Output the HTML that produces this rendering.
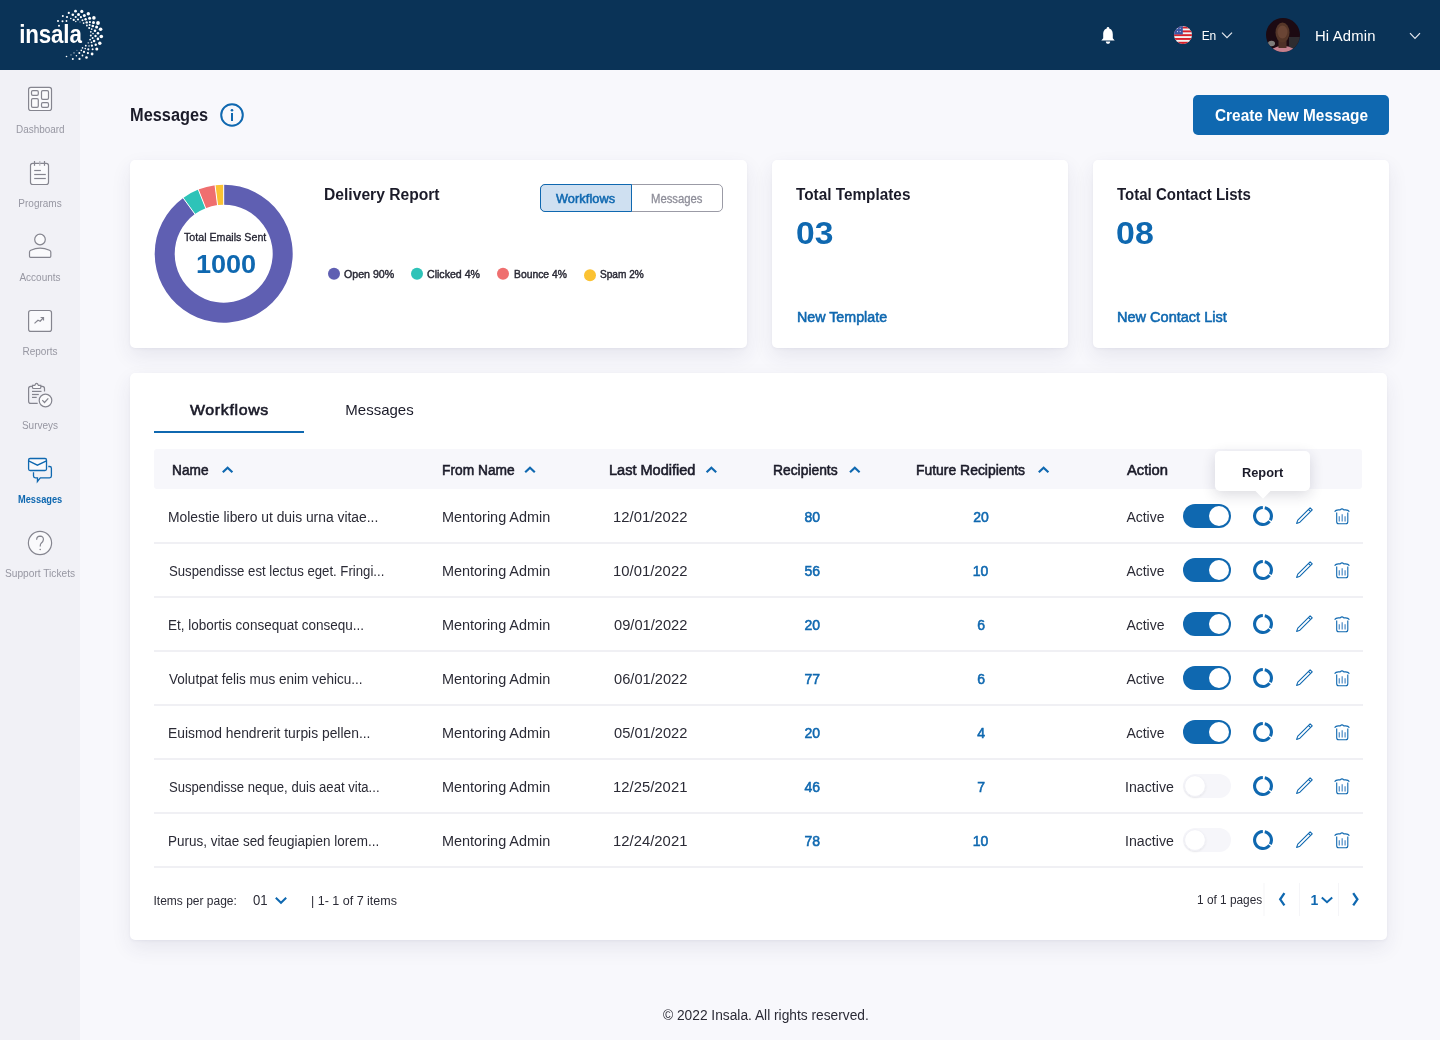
<!DOCTYPE html>
<html><head><meta charset="utf-8"><title>Messages</title>
<style>
html,body{margin:0;padding:0}
body{width:1440px;height:1040px;position:relative;overflow:hidden;background:#f8f8fc;font-family:"Liberation Sans",sans-serif}
.t{position:absolute;white-space:nowrap;z-index:6;-webkit-font-smoothing:antialiased}
.txt{position:absolute;left:0;top:0;width:1440px;height:1040px;z-index:6;will-change:transform}
.abs{position:absolute}
.hdr{left:0;top:0;width:1440px;height:70px;background:#0a3357}
.side{left:0;top:70px;width:80px;height:970px;background:#f1f1f6}
.card{background:#fff;border-radius:5px;box-shadow:0 1px 3px rgba(50,50,90,0.05),0 8px 20px rgba(50,50,90,0.085)}
svg.ov{position:absolute;left:0;top:0;z-index:5}
.tip{position:absolute;left:1215px;top:451px;width:95px;height:40px;background:#fff;border-radius:5px;box-shadow:0 4px 14px rgba(30,30,60,0.16);z-index:4}
</style></head><body>
<div class="abs hdr"></div>
<div class="abs side"></div>
<div class="abs card" style="left:1193px;top:95px;width:196px;height:40px;background:#0f68b0;box-shadow:none;border-radius:5px"></div>
<div class="abs card" style="left:130px;top:160px;width:617px;height:188px"></div>
<div class="abs card" style="left:772px;top:160px;width:296px;height:188px"></div>
<div class="abs card" style="left:1093px;top:160px;width:296px;height:188px"></div>
<div class="abs card" style="left:130px;top:373px;width:1257px;height:567px"></div>
<!-- delivery toggle -->
<div class="abs" style="left:540px;top:184px;width:181px;height:26px;border:1px solid #9b9ba6;border-radius:5px;background:#fff"></div>
<div class="abs" style="left:540px;top:184px;width:90px;height:26px;border:1px solid #0f68b0;border-radius:5px 0 0 5px;background:#cfe0f1"></div>
<!-- table header bg -->
<div class="abs" style="left:154px;top:449px;width:1208px;height:40px;background:#f7f7fb;border-radius:3px"></div>
<div class="tip"></div>
<svg class="ov" width="1440" height="1040" viewBox="0 0 1440 1040">
 <!-- logo dots -->
 <g fill="#ffffff"><circle cx="75.5" cy="11.2" r="1.4"/><circle cx="81.8" cy="11.4" r="1.6"/><circle cx="68.8" cy="12.9" r="1.1"/><circle cx="88.3" cy="13.8" r="1.7"/><circle cx="72.8" cy="14.8" r="1.3"/><circle cx="78.5" cy="14.5" r="1.5"/><circle cx="84.3" cy="15.6" r="1.5"/><circle cx="62.8" cy="16.1" r="1.0"/><circle cx="67" cy="17" r="1.1"/><circle cx="75.7" cy="17" r="1.1"/><circle cx="80.9" cy="17.2" r="1.1"/><circle cx="89.6" cy="18.3" r="1.5"/><circle cx="93.9" cy="17.9" r="1.8"/><circle cx="70.8" cy="18.5" r="0.8"/><circle cx="85.6" cy="19.2" r="1.2"/><circle cx="73.7" cy="19.9" r="1.1"/><circle cx="78" cy="19.5" r="1.1"/><circle cx="82.5" cy="20.3" r="1.0"/><circle cx="58" cy="21" r="1.0"/><circle cx="62.5" cy="21.2" r="1.0"/><circle cx="66.5" cy="21" r="0.9"/><circle cx="75.8" cy="21.5" r="0.7"/><circle cx="80" cy="22" r="0.7" opacity="0.5"/><circle cx="86.7" cy="22.4" r="1.2"/><circle cx="89.9" cy="22.1" r="1.1"/><circle cx="93.5" cy="22.4" r="1.5"/><circle cx="98" cy="23" r="1.9"/><circle cx="83.6" cy="23.1" r="0.9"/><circle cx="59" cy="25.7" r="1.0"/><circle cx="86.9" cy="25.5" r="0.9"/><circle cx="89.6" cy="25" r="1.0"/><circle cx="92.8" cy="26" r="1.3"/><circle cx="96.6" cy="27.1" r="1.5"/><circle cx="100.6" cy="29.3" r="1.8"/><circle cx="89.2" cy="28" r="1.0"/><circle cx="91.7" cy="29.1" r="0.9"/><circle cx="95" cy="30.7" r="1.3"/><circle cx="90.8" cy="31.8" r="0.9"/><circle cx="98" cy="33.3" r="1.3"/><circle cx="93" cy="33.6" r="0.8"/><circle cx="90.8" cy="35.6" r="1.0"/><circle cx="95.5" cy="36" r="1.2"/><circle cx="101.3" cy="36.5" r="1.8"/><circle cx="92.6" cy="38.1" r="1.0"/><circle cx="97.9" cy="38.9" r="1.3"/><circle cx="90.1" cy="39.6" r="0.9"/><circle cx="94.1" cy="41" r="1.3"/><circle cx="91.5" cy="42.3" r="0.9"/><circle cx="88.3" cy="42.8" r="0.9" opacity="0.6"/><circle cx="99.8" cy="43.2" r="1.7"/><circle cx="95.7" cy="44.8" r="1.2"/><circle cx="85.8" cy="45.7" r="0.9"/><circle cx="89" cy="45.9" r="0.9" opacity="0.6"/><circle cx="91.9" cy="45.7" r="1.1"/><circle cx="82.5" cy="47.9" r="0.8"/><circle cx="85.2" cy="48.6" r="0.8"/><circle cx="88.3" cy="49.3" r="1.1"/><circle cx="92.6" cy="49.3" r="1.0"/><circle cx="96.8" cy="49" r="1.5"/><circle cx="76.9" cy="50.4" r="0.6" opacity="0.4"/><circle cx="81.3" cy="50.4" r="0.8"/><circle cx="84" cy="51.9" r="1.1"/><circle cx="87.9" cy="53.1" r="1.1"/><circle cx="92.1" cy="54" r="1.4"/><circle cx="74" cy="52.9" r="0.8" opacity="0.5"/><circle cx="79.3" cy="53.1" r="1.0"/><circle cx="71" cy="54.9" r="0.8" opacity="0.4"/><circle cx="76.4" cy="55.8" r="0.8"/><circle cx="82.5" cy="55.5" r="0.9"/><circle cx="66.5" cy="56.5" r="0.8"/><circle cx="72.8" cy="58.9" r="1.0"/><circle cx="79.5" cy="58.9" r="1.1"/><circle cx="86.5" cy="57.5" r="1.3"/></g>
 <!-- bell -->
 <g fill="#ffffff">
  <circle cx="1108" cy="28.2" r="1.3"/>
  <path d="M1108,28.6 C1104.2,28.6 1103.2,31.6 1103.2,34.6 L1103.2,38.2 L1101.3,40.6 L1114.7,40.6 L1112.8,38.2 L1112.8,34.6 C1112.8,31.6 1111.8,28.6 1108,28.6 Z"/>
  <path d="M1105.8,41.4 L1110.2,41.4 C1110.2,43 1109.2,43.8 1108,43.8 C1106.8,43.8 1105.8,43 1105.8,41.4 Z"/>
 </g>
 <!-- flag -->
 <defs><filter id="ks" x="-50%" y="-50%" width="200%" height="200%"><feDropShadow dx="0" dy="1" stdDeviation="1" flood-color="#000" flood-opacity="0.08"/></filter><clipPath id="fc"><circle cx="1183" cy="35" r="9"/></clipPath><clipPath id="ac"><circle cx="1283" cy="35" r="17"/></clipPath></defs>
 <g clip-path="url(#fc)">
  <rect x="1174" y="26" width="18" height="18" fill="#f2f2f2"/>
  <rect x="1174" y="26.6" width="18" height="1.9" fill="#d8202b"/>
  <rect x="1174" y="30.4" width="18" height="1.9" fill="#d8202b"/>
  <rect x="1174" y="34.2" width="18" height="1.9" fill="#d8202b"/>
  <rect x="1174" y="38.0" width="18" height="1.9" fill="#d8202b"/>
  <rect x="1174" y="41.8" width="18" height="2.2" fill="#d8202b"/>
  <rect x="1174" y="26" width="8.8" height="8.4" fill="#3b56a3"/>
  <g fill="#dfe5f3"><circle cx="1177.5" cy="28.3" r=".55"/><circle cx="1180.2" cy="28.3" r=".55"/><circle cx="1177.5" cy="31.6" r=".55"/><circle cx="1180.2" cy="31.6" r=".55"/></g>
 </g>
 <polyline points="1222,32.6 1227,37.6 1232,32.6" fill="none" stroke="#e6e9ef" stroke-width="1.2"/>
 <!-- avatar -->
 <g clip-path="url(#ac)">
  <rect x="1266" y="18" width="34" height="34" fill="#1c0a12"/>
  <rect x="1289" y="37" width="11" height="12" fill="#2e2c30"/>
  <ellipse cx="1283" cy="54" rx="13.5" ry="8" fill="#c4808e"/>
  <rect x="1278.5" y="40" width="8" height="8" fill="#4e3027"/>
  <ellipse cx="1282.5" cy="32.5" rx="7" ry="10" fill="#553628"/>
  <ellipse cx="1282.5" cy="32" rx="5" ry="6.5" fill="#6a4535"/>
  <ellipse cx="1271.5" cy="43.5" rx="3.5" ry="2.8" fill="#7e7c7a"/>
 </g>
 <polyline points="1410,33.2 1415,38.4 1420,33.2" fill="none" stroke="#e6e9ef" stroke-width="1.2"/>

 <!-- sidebar icons -->
 <g fill="none" stroke="#85858f" stroke-width="1.2">
  <rect x="28.6" y="87.4" width="22.9" height="23.1" rx="2.2" fill="#fafafc"/>
  <rect x="31.5" y="90.6" width="6.8" height="4.8" rx="1.3"/>
  <rect x="41.5" y="90.6" width="7" height="8.8" rx="1.3"/>
  <rect x="31.5" y="98.6" width="6.8" height="8.8" rx="1.3"/>
  <rect x="41.5" y="102.6" width="7" height="4.8" rx="1.3"/>

  <rect x="30.5" y="163.4" width="18" height="21.1" rx="2.2" fill="#fafafc"/>
  <line x1="34.5" y1="161" x2="34.5" y2="165.8"/><line x1="39.8" y1="161" x2="39.8" y2="165.8" stroke="#b3b3bb"/><line x1="44.5" y1="161" x2="44.5" y2="165.8"/>
  <line x1="34.2" y1="170.5" x2="40.9" y2="170.5"/><line x1="34.2" y1="174.5" x2="45.8" y2="174.5"/><line x1="34.2" y1="178.5" x2="45.8" y2="178.5"/>

  <circle cx="40" cy="239.5" r="5.3" fill="#fafafc"/>
  <path d="M30.5,257.3 L49.8,257.3 Q50.8,257.3 50.8,256.3 L50.8,252 Q50.8,250.8 49.5,250.2 Q40,246.2 30.8,250.2 Q29.5,250.8 29.5,252 L29.5,256.3 Q29.5,257.3 30.5,257.3 Z" fill="#fafafc"/>

  <rect x="28.6" y="310.5" width="22.9" height="20.9" rx="2.2" fill="#fafafc"/>
  <polyline points="34.5,323.4 38,320.3 40.2,321.2 43.5,317.5"/>
  <polyline points="40.6,317.5 43.5,317.5 43.5,320.6"/>

  <path d="M44.5,391.5 L44.5,388.5 Q44.5,386.3 42.3,386.3 L40.8,386.3 M32.5,386.3 L30.8,386.3 Q28.6,386.3 28.6,388.5 L28.6,401.2 Q28.6,403.4 30.8,403.4 L37.7,403.4"/>
  <path d="M32.5,385.4 L34.8,385.4 Q35.5,383.4 36.6,383.4 Q37.7,383.4 38.4,385.4 L40.8,385.4 L40.8,387.5 Q40.8,388.5 39.8,388.5 L33.5,388.5 Q32.5,388.5 32.5,387.5 Z" fill="#fafafc"/>
  <line x1="32" y1="391.4" x2="41.5" y2="391.4"/><line x1="32" y1="394.5" x2="38.8" y2="394.5"/><line x1="32" y1="397.4" x2="36.7" y2="397.4"/>
  <circle cx="45.5" cy="400.5" r="6.3" fill="#fafafc"/>
  <polyline points="42.3,400.2 44.5,402.5 48.3,398.3"/>

  <circle cx="40" cy="543" r="11.6" fill="#fafafc"/>
  <path d="M36.6,539.8 Q36.8,536.2 40.1,536.2 Q43.6,536.4 43.4,539.6 Q43.2,541.6 41.2,543.2 Q40.2,544.2 40.2,546.4" />
  <circle cx="40.2" cy="549.5" r="0.8" fill="#85858f" stroke="none"/>
 </g>
 <g fill="none" stroke="#0f68b0" stroke-width="1.3">
  <rect x="28.6" y="458.5" width="17.9" height="12" rx="1.5" fill="#fafafc"/>
  <polyline points="28.6,460.9 37.4,465.2 46.5,460.9"/>
  <path d="M48.3,466.5 L49.6,466.5 Q51.4,466.5 51.4,468.3 L51.4,476 Q51.4,477.8 49.6,477.8 L40.3,477.8 L37.4,481.5 L37.5,477.8 L35.3,477.8 Q33.5,477.8 33.5,476 L33.5,472.3"/>
 </g>

 <!-- info icon -->
 <circle cx="232" cy="115" r="10.8" fill="none" stroke="#0f68b0" stroke-width="2"/>
 <circle cx="232" cy="110.3" r="1.3" fill="#0f68b0"/>
 <rect x="231" y="113" width="2" height="8" fill="#0f68b0"/>

 <!-- donut -->
 <path d="M223.70,184.70 A69,69 0 1 1 183.14,197.88 L194.90,214.06 A49,49 0 1 0 223.70,204.70 Z" fill="#5f5fb2"/><path d="M183.14,197.88 A69,69 0 0 1 198.30,189.55 L205.66,208.14 A49,49 0 0 0 194.90,214.06 Z" fill="#2ec3b8"/><path d="M198.30,189.55 A69,69 0 0 1 215.05,185.24 L217.56,205.09 A49,49 0 0 0 205.66,208.14 Z" fill="#ef6f6f"/><path d="M215.05,185.24 A69,69 0 0 1 223.70,184.70 L223.70,204.70 A49,49 0 0 0 217.56,205.09 Z" fill="#fbc232"/><line x1="223.70" y1="205.70" x2="223.70" y2="183.70" stroke="#fff" stroke-width="1"/><line x1="195.49" y1="214.87" x2="182.56" y2="197.07" stroke="#fff" stroke-width="1"/><line x1="206.03" y1="209.07" x2="197.93" y2="188.62" stroke="#fff" stroke-width="1"/><line x1="217.68" y1="206.08" x2="214.93" y2="184.25" stroke="#fff" stroke-width="1"/>

 <!-- legend dots -->
 <circle cx="334" cy="273.8" r="6" fill="#5f5fb2"/>
 <circle cx="417" cy="273.8" r="6" fill="#2ec3b8"/>
 <circle cx="503" cy="273.8" r="6" fill="#ef6f6f"/>
 <circle cx="590" cy="275.3" r="6" fill="#fbc232"/>

 <!-- tab underline -->
 <rect x="154" y="431" width="150" height="2" fill="#0f68b0"/>
 <!-- sort carets -->
 <g fill="none" stroke="#0f68b0" stroke-width="2.2">
  <polyline points="222.8,472.2 227.6,467.8 232.4,472.2"/>
  <polyline points="525.2,472.2 530,467.8 534.8,472.2"/>
  <polyline points="706.6,472.2 711.4,467.8 716.2,472.2"/>
  <polyline points="850,472.2 854.8,467.8 859.6,472.2"/>
  <polyline points="1038.8,472.2 1043.6,467.8 1048.4,472.2"/>
 </g>
 <rect x="154" y="542" width="1209" height="2" fill="#f0f0f4"/><rect x="1183" y="504" width="48" height="24" rx="12" fill="#0f68b0"/><circle cx="1219" cy="516" r="10" fill="#fff"/><path d="M1265.08,506.22 A10,10 0 0 1 1271.66,521.00 L1268.98,519.45 A6.9,6.9 0 0 0 1264.43,509.25 Z" fill="#0f68b0"/><path d="M1270.77,522.29 A10,10 0 1 1 1262.83,506.00 L1262.88,509.10 A6.9,6.9 0 1 0 1268.36,520.34 Z" fill="#0f68b0"/><path d="M1296.60,523.40 L1297.80,520.08 L1310.11,507.77 L1312.23,509.89 L1299.92,522.20 Z M1308.41,509.47 L1310.53,511.59" fill="none" stroke="#0f68b0" stroke-width="1.1" stroke-linejoin="round"/><path d="M1334.6,511.6 Q1336,509.6 1339,509.9 L1340.2,509.9 Q1342,507.9 1343.8,509.9 L1345,509.9 Q1348,509.6 1349.4,511.6" fill="none" stroke="#0f68b0" stroke-width="1.1"/><path d="M1336.7,512.6 L1336.7,521.8 Q1336.7,523.8 1338.7,523.8 L1345.8,523.8 Q1347.8,523.8 1347.8,521.8 L1347.8,512.6" fill="none" stroke="#0f68b0" stroke-width="1.1"/><g stroke="#5f97cc" stroke-width="1.35"><line x1="1339.3" y1="516.3" x2="1339.3" y2="521.4"/><line x1="1342.2" y1="514.3" x2="1342.2" y2="521.4"/><line x1="1345.1" y1="516.3" x2="1345.1" y2="521.4"/></g><rect x="154" y="596" width="1209" height="2" fill="#f0f0f4"/><rect x="1183" y="558" width="48" height="24" rx="12" fill="#0f68b0"/><circle cx="1219" cy="570" r="10" fill="#fff"/><path d="M1265.08,560.22 A10,10 0 0 1 1271.66,575.00 L1268.98,573.45 A6.9,6.9 0 0 0 1264.43,563.25 Z" fill="#0f68b0"/><path d="M1270.77,576.29 A10,10 0 1 1 1262.83,560.00 L1262.88,563.10 A6.9,6.9 0 1 0 1268.36,574.34 Z" fill="#0f68b0"/><path d="M1296.60,577.40 L1297.80,574.08 L1310.11,561.77 L1312.23,563.89 L1299.92,576.20 Z M1308.41,563.47 L1310.53,565.59" fill="none" stroke="#0f68b0" stroke-width="1.1" stroke-linejoin="round"/><path d="M1334.6,565.6 Q1336,563.6 1339,563.9 L1340.2,563.9 Q1342,561.9 1343.8,563.9 L1345,563.9 Q1348,563.6 1349.4,565.6" fill="none" stroke="#0f68b0" stroke-width="1.1"/><path d="M1336.7,566.6 L1336.7,575.8 Q1336.7,577.8 1338.7,577.8 L1345.8,577.8 Q1347.8,577.8 1347.8,575.8 L1347.8,566.6" fill="none" stroke="#0f68b0" stroke-width="1.1"/><g stroke="#5f97cc" stroke-width="1.35"><line x1="1339.3" y1="570.3" x2="1339.3" y2="575.4"/><line x1="1342.2" y1="568.3" x2="1342.2" y2="575.4"/><line x1="1345.1" y1="570.3" x2="1345.1" y2="575.4"/></g><rect x="154" y="650" width="1209" height="2" fill="#f0f0f4"/><rect x="1183" y="612" width="48" height="24" rx="12" fill="#0f68b0"/><circle cx="1219" cy="624" r="10" fill="#fff"/><path d="M1265.08,614.22 A10,10 0 0 1 1271.66,629.00 L1268.98,627.45 A6.9,6.9 0 0 0 1264.43,617.25 Z" fill="#0f68b0"/><path d="M1270.77,630.29 A10,10 0 1 1 1262.83,614.00 L1262.88,617.10 A6.9,6.9 0 1 0 1268.36,628.34 Z" fill="#0f68b0"/><path d="M1296.60,631.40 L1297.80,628.08 L1310.11,615.77 L1312.23,617.89 L1299.92,630.20 Z M1308.41,617.47 L1310.53,619.59" fill="none" stroke="#0f68b0" stroke-width="1.1" stroke-linejoin="round"/><path d="M1334.6,619.6 Q1336,617.6 1339,617.9 L1340.2,617.9 Q1342,615.9 1343.8,617.9 L1345,617.9 Q1348,617.6 1349.4,619.6" fill="none" stroke="#0f68b0" stroke-width="1.1"/><path d="M1336.7,620.6 L1336.7,629.8 Q1336.7,631.8 1338.7,631.8 L1345.8,631.8 Q1347.8,631.8 1347.8,629.8 L1347.8,620.6" fill="none" stroke="#0f68b0" stroke-width="1.1"/><g stroke="#5f97cc" stroke-width="1.35"><line x1="1339.3" y1="624.3" x2="1339.3" y2="629.4"/><line x1="1342.2" y1="622.3" x2="1342.2" y2="629.4"/><line x1="1345.1" y1="624.3" x2="1345.1" y2="629.4"/></g><rect x="154" y="704" width="1209" height="2" fill="#f0f0f4"/><rect x="1183" y="666" width="48" height="24" rx="12" fill="#0f68b0"/><circle cx="1219" cy="678" r="10" fill="#fff"/><path d="M1265.08,668.22 A10,10 0 0 1 1271.66,683.00 L1268.98,681.45 A6.9,6.9 0 0 0 1264.43,671.25 Z" fill="#0f68b0"/><path d="M1270.77,684.29 A10,10 0 1 1 1262.83,668.00 L1262.88,671.10 A6.9,6.9 0 1 0 1268.36,682.34 Z" fill="#0f68b0"/><path d="M1296.60,685.40 L1297.80,682.08 L1310.11,669.77 L1312.23,671.89 L1299.92,684.20 Z M1308.41,671.47 L1310.53,673.59" fill="none" stroke="#0f68b0" stroke-width="1.1" stroke-linejoin="round"/><path d="M1334.6,673.6 Q1336,671.6 1339,671.9 L1340.2,671.9 Q1342,669.9 1343.8,671.9 L1345,671.9 Q1348,671.6 1349.4,673.6" fill="none" stroke="#0f68b0" stroke-width="1.1"/><path d="M1336.7,674.6 L1336.7,683.8 Q1336.7,685.8 1338.7,685.8 L1345.8,685.8 Q1347.8,685.8 1347.8,683.8 L1347.8,674.6" fill="none" stroke="#0f68b0" stroke-width="1.1"/><g stroke="#5f97cc" stroke-width="1.35"><line x1="1339.3" y1="678.3" x2="1339.3" y2="683.4"/><line x1="1342.2" y1="676.3" x2="1342.2" y2="683.4"/><line x1="1345.1" y1="678.3" x2="1345.1" y2="683.4"/></g><rect x="154" y="758" width="1209" height="2" fill="#f0f0f4"/><rect x="1183" y="720" width="48" height="24" rx="12" fill="#0f68b0"/><circle cx="1219" cy="732" r="10" fill="#fff"/><path d="M1265.08,722.22 A10,10 0 0 1 1271.66,737.00 L1268.98,735.45 A6.9,6.9 0 0 0 1264.43,725.25 Z" fill="#0f68b0"/><path d="M1270.77,738.29 A10,10 0 1 1 1262.83,722.00 L1262.88,725.10 A6.9,6.9 0 1 0 1268.36,736.34 Z" fill="#0f68b0"/><path d="M1296.60,739.40 L1297.80,736.08 L1310.11,723.77 L1312.23,725.89 L1299.92,738.20 Z M1308.41,725.47 L1310.53,727.59" fill="none" stroke="#0f68b0" stroke-width="1.1" stroke-linejoin="round"/><path d="M1334.6,727.6 Q1336,725.6 1339,725.9 L1340.2,725.9 Q1342,723.9 1343.8,725.9 L1345,725.9 Q1348,725.6 1349.4,727.6" fill="none" stroke="#0f68b0" stroke-width="1.1"/><path d="M1336.7,728.6 L1336.7,737.8 Q1336.7,739.8 1338.7,739.8 L1345.8,739.8 Q1347.8,739.8 1347.8,737.8 L1347.8,728.6" fill="none" stroke="#0f68b0" stroke-width="1.1"/><g stroke="#5f97cc" stroke-width="1.35"><line x1="1339.3" y1="732.3" x2="1339.3" y2="737.4"/><line x1="1342.2" y1="730.3" x2="1342.2" y2="737.4"/><line x1="1345.1" y1="732.3" x2="1345.1" y2="737.4"/></g><rect x="154" y="812" width="1209" height="2" fill="#f0f0f4"/><rect x="1183" y="774" width="48" height="24" rx="12" fill="#f6f6fa"/><circle cx="1195" cy="786" r="10.3" fill="#fff" stroke="#ededf3" stroke-width="0.6" filter="url(#ks)"/><path d="M1265.08,776.22 A10,10 0 0 1 1271.66,791.00 L1268.98,789.45 A6.9,6.9 0 0 0 1264.43,779.25 Z" fill="#0f68b0"/><path d="M1270.77,792.29 A10,10 0 1 1 1262.83,776.00 L1262.88,779.10 A6.9,6.9 0 1 0 1268.36,790.34 Z" fill="#0f68b0"/><path d="M1296.60,793.40 L1297.80,790.08 L1310.11,777.77 L1312.23,779.89 L1299.92,792.20 Z M1308.41,779.47 L1310.53,781.59" fill="none" stroke="#0f68b0" stroke-width="1.1" stroke-linejoin="round"/><path d="M1334.6,781.6 Q1336,779.6 1339,779.9 L1340.2,779.9 Q1342,777.9 1343.8,779.9 L1345,779.9 Q1348,779.6 1349.4,781.6" fill="none" stroke="#0f68b0" stroke-width="1.1"/><path d="M1336.7,782.6 L1336.7,791.8 Q1336.7,793.8 1338.7,793.8 L1345.8,793.8 Q1347.8,793.8 1347.8,791.8 L1347.8,782.6" fill="none" stroke="#0f68b0" stroke-width="1.1"/><g stroke="#5f97cc" stroke-width="1.35"><line x1="1339.3" y1="786.3" x2="1339.3" y2="791.4"/><line x1="1342.2" y1="784.3" x2="1342.2" y2="791.4"/><line x1="1345.1" y1="786.3" x2="1345.1" y2="791.4"/></g><rect x="154" y="866" width="1209" height="2" fill="#f0f0f4"/><rect x="1183" y="828" width="48" height="24" rx="12" fill="#f6f6fa"/><circle cx="1195" cy="840" r="10.3" fill="#fff" stroke="#ededf3" stroke-width="0.6" filter="url(#ks)"/><path d="M1265.08,830.22 A10,10 0 0 1 1271.66,845.00 L1268.98,843.45 A6.9,6.9 0 0 0 1264.43,833.25 Z" fill="#0f68b0"/><path d="M1270.77,846.29 A10,10 0 1 1 1262.83,830.00 L1262.88,833.10 A6.9,6.9 0 1 0 1268.36,844.34 Z" fill="#0f68b0"/><path d="M1296.60,847.40 L1297.80,844.08 L1310.11,831.77 L1312.23,833.89 L1299.92,846.20 Z M1308.41,833.47 L1310.53,835.59" fill="none" stroke="#0f68b0" stroke-width="1.1" stroke-linejoin="round"/><path d="M1334.6,835.6 Q1336,833.6 1339,833.9 L1340.2,833.9 Q1342,831.9 1343.8,833.9 L1345,833.9 Q1348,833.6 1349.4,835.6" fill="none" stroke="#0f68b0" stroke-width="1.1"/><path d="M1336.7,836.6 L1336.7,845.8 Q1336.7,847.8 1338.7,847.8 L1345.8,847.8 Q1347.8,847.8 1347.8,845.8 L1347.8,836.6" fill="none" stroke="#0f68b0" stroke-width="1.1"/><g stroke="#5f97cc" stroke-width="1.35"><line x1="1339.3" y1="840.3" x2="1339.3" y2="845.4"/><line x1="1342.2" y1="838.3" x2="1342.2" y2="845.4"/><line x1="1345.1" y1="840.3" x2="1345.1" y2="845.4"/></g>
 <!-- pagination -->
 <g fill="none" stroke="#0f68b0" stroke-width="2">
  <polyline points="275.8,897.8 281,902.8 286.2,897.8"/>
  <polyline points="1284.4,893.2 1280.2,899.3 1284.4,905.4" stroke-width="2.3"/>
  <polyline points="1321.8,897.6 1327,902.2 1332.2,897.6"/>
  <polyline points="1353.2,893.2 1357.4,899.3 1353.2,905.4" stroke-width="2.3"/>
 </g>
 <g fill="#f5f5f8">
  <rect x="1263.5" y="883" width="1" height="33"/>
  <rect x="1299" y="883" width="1" height="33"/>
  <rect x="1338" y="883" width="1" height="33"/>
 </g>
</svg>
<svg class="ov" width="1440" height="1040" style="z-index:8;pointer-events:none">
 <path d="M1255,490.5 L1263,498.8 L1271,490.5 Z" fill="#ffffff"/>
</svg>
<div class="txt"><div class="t" style="left:18.70px;top:21px;font-size:26px;line-height:26px;color:#ffffff;font-weight:700;letter-spacing:-0.16px;transform:scaleX(0.860);transform-origin:1.00px 0">insala</div>
<div class="t" style="left:1201.70px;top:30px;font-size:12px;line-height:12px;color:#ffffff;letter-spacing:-0.20px">En</div>
<div class="t" style="left:1314.60px;top:29px;font-size:14px;line-height:14px;color:#ffffff;letter-spacing:0.15px;transform:scaleX(1.060);transform-origin:1.00px 0">Hi Admin</div>
<div class="t" style="left:16.00px;top:125px;font-size:10px;line-height:10px;color:#9797a2;transform:scaleX(0.993);transform-origin:0.00px 0">Dashboard</div>
<div class="t" style="left:18.33px;top:199px;font-size:10px;line-height:10px;color:#9797a2">Programs</div>
<div class="t" style="left:19.43px;top:273px;font-size:10px;line-height:10px;color:#9797a2">Accounts</div>
<div class="t" style="left:22.49px;top:347px;font-size:10px;line-height:10px;color:#9797a2">Reports</div>
<div class="t" style="left:21.94px;top:421px;font-size:10px;line-height:10px;color:#9797a2">Surveys</div>
<div class="t" style="left:17.50px;top:495px;font-size:10px;line-height:10px;color:#0f68b0;font-weight:700;transform:scaleX(0.926);transform-origin:0.00px 0">Messages</div>
<div class="t" style="left:4.70px;top:569px;font-size:10px;line-height:10px;color:#9797a2;transform:scaleX(1.017);transform-origin:0.00px 0">Support Tickets</div>
<div class="t" style="left:129.90px;top:106px;font-size:18px;line-height:18px;color:#1b1b29;font-weight:700;transform:scaleX(0.907);transform-origin:1.00px 0">Messages</div>
<div class="t" style="left:1214.90px;top:108px;font-size:16px;line-height:16px;color:#ffffff;font-weight:700;transform:scaleX(0.961);transform-origin:0.00px 0">Create New Message</div>
<div class="t" style="left:323.70px;top:187px;font-size:16px;line-height:16px;color:#1b1b29;font-weight:700;transform:scaleX(0.977);transform-origin:1.00px 0">Delivery Report</div>
<div class="t" style="left:556.20px;top:193px;font-size:12px;line-height:12px;color:#0f68b0;letter-spacing:0.08px;transform:scaleX(1.060);transform-origin:0.00px 0;-webkit-text-stroke:0.5px #0f68b0">Workflows</div>
<div class="t" style="left:651.30px;top:193px;font-size:12px;line-height:12px;color:#8e8e99;transform:scaleX(0.942);transform-origin:0.00px 0;-webkit-text-stroke:0.3px #8e8e99">Messages</div>
<div class="t" style="left:183.60px;top:232px;font-size:11px;line-height:11px;color:#222230;transform:scaleX(0.968);transform-origin:0.00px 0;-webkit-text-stroke:0.3px #222230">Total Emails Sent</div>
<div class="t" style="left:195.50px;top:251px;font-size:26px;line-height:26px;color:#0f68b0;font-weight:700;transform:scaleX(1.041);transform-origin:1.00px 0">1000</div>
<div class="t" style="left:344.20px;top:269px;font-size:11px;line-height:11px;color:#2a2a36;transform:scaleX(0.966);transform-origin:0.00px 0;-webkit-text-stroke:0.45px #2a2a36">Open 90%</div>
<div class="t" style="left:427.40px;top:269px;font-size:11px;line-height:11px;color:#2a2a36;transform:scaleX(0.963);transform-origin:0.00px 0;-webkit-text-stroke:0.45px #2a2a36">Clicked 4%</div>
<div class="t" style="left:513.60px;top:269px;font-size:11px;line-height:11px;color:#2a2a36;transform:scaleX(0.940);transform-origin:0.00px 0;-webkit-text-stroke:0.45px #2a2a36">Bounce 4%</div>
<div class="t" style="left:600.00px;top:269px;font-size:11px;line-height:11px;color:#2a2a36;transform:scaleX(0.918);transform-origin:0.00px 0;-webkit-text-stroke:0.45px #2a2a36">Spam 2%</div>
<div class="t" style="left:796.10px;top:187px;font-size:16px;line-height:16px;color:#1b1b29;font-weight:700;transform:scaleX(0.958);transform-origin:0.00px 0">Total Templates</div>
<div class="t" style="left:795.70px;top:217px;font-size:32px;line-height:32px;color:#0f68b0;font-weight:700;transform:scaleX(1.050);transform-origin:1.00px 0">03</div>
<div class="t" style="left:796.70px;top:310px;font-size:14px;line-height:14px;color:#0f68b0;transform:scaleX(1.019);transform-origin:1.00px 0;-webkit-text-stroke:0.55px #0f68b0">New Template</div>
<div class="t" style="left:1117.00px;top:187px;font-size:16px;line-height:16px;color:#1b1b29;font-weight:700;transform:scaleX(0.938);transform-origin:0.00px 0">Total Contact Lists</div>
<div class="t" style="left:1116.00px;top:217px;font-size:32px;line-height:32px;color:#0f68b0;font-weight:700;letter-spacing:0.17px;transform:scaleX(1.060);transform-origin:1.00px 0">08</div>
<div class="t" style="left:1116.80px;top:310px;font-size:14px;line-height:14px;color:#0f68b0;transform:scaleX(1.038);transform-origin:1.00px 0;-webkit-text-stroke:0.55px #0f68b0">New Contact List</div>
<div class="t" style="left:190.30px;top:402px;font-size:15px;line-height:15px;color:#1b1b29;letter-spacing:0.61px;transform:scaleX(1.060);transform-origin:0.00px 0;-webkit-text-stroke:0.6px #1b1b29">Workflows</div>
<div class="t" style="left:345.30px;top:402px;font-size:15px;line-height:15px;color:#1b1b29">Messages</div>
<div class="t" style="left:171.60px;top:463px;font-size:14px;line-height:14px;color:#1b1b29;transform:scaleX(0.977);transform-origin:1.00px 0;-webkit-text-stroke:0.55px #1b1b29">Name</div>
<div class="t" style="left:441.50px;top:463px;font-size:14px;line-height:14px;color:#1b1b29;transform:scaleX(0.983);transform-origin:1.00px 0;-webkit-text-stroke:0.55px #1b1b29">From Name</div>
<div class="t" style="left:609.40px;top:463px;font-size:14px;line-height:14px;color:#1b1b29;transform:scaleX(1.038);transform-origin:1.00px 0;-webkit-text-stroke:0.55px #1b1b29">Last Modified</div>
<div class="t" style="left:772.70px;top:463px;font-size:14px;line-height:14px;color:#1b1b29;transform:scaleX(0.988);transform-origin:1.00px 0;-webkit-text-stroke:0.55px #1b1b29">Recipients</div>
<div class="t" style="left:915.60px;top:463px;font-size:14px;line-height:14px;color:#1b1b29;transform:scaleX(0.994);transform-origin:1.00px 0;-webkit-text-stroke:0.55px #1b1b29">Future Recipients</div>
<div class="t" style="left:1126.50px;top:463px;font-size:14px;line-height:14px;color:#1b1b29;transform:scaleX(1.054);transform-origin:0.00px 0;-webkit-text-stroke:0.55px #1b1b29">Action</div>
<div class="t" style="left:1241.80px;top:466px;font-size:13px;line-height:13px;color:#1b1b29;font-weight:700;transform:scaleX(0.985);transform-origin:0.00px 0">Report</div>
<div class="t" style="left:167.50px;top:510px;font-size:14px;line-height:14px;color:#2b2b36;transform:scaleX(0.990);transform-origin:1.00px 0">Molestie libero ut duis urna vitae...</div>
<div class="t" style="left:441.50px;top:510px;font-size:14px;line-height:14px;color:#2b2b36;transform:scaleX(1.031);transform-origin:1.00px 0">Mentoring Admin</div>
<div class="t" style="left:613.40px;top:510px;font-size:14px;line-height:14px;color:#2b2b36;letter-spacing:0.02px;transform:scaleX(1.060);transform-origin:1.00px 0">12/01/2022</div>
<div class="t" style="left:804.41px;top:510px;font-size:14px;line-height:14px;color:#0f68b0;-webkit-text-stroke:0.55px #0f68b0">80</div>
<div class="t" style="left:973.31px;top:510px;font-size:14px;line-height:14px;color:#0f68b0;-webkit-text-stroke:0.55px #0f68b0">20</div>
<div class="t" style="left:1126.40px;top:510px;font-size:14px;line-height:14px;color:#2b2b36">Active</div>
<div class="t" style="left:168.50px;top:564px;font-size:14px;line-height:14px;color:#2b2b36;transform:scaleX(0.941);transform-origin:0.00px 0">Suspendisse est lectus eget. Fringi...</div>
<div class="t" style="left:441.50px;top:564px;font-size:14px;line-height:14px;color:#2b2b36;transform:scaleX(1.031);transform-origin:1.00px 0">Mentoring Admin</div>
<div class="t" style="left:613.40px;top:564px;font-size:14px;line-height:14px;color:#2b2b36;letter-spacing:0.02px;transform:scaleX(1.060);transform-origin:1.00px 0">10/01/2022</div>
<div class="t" style="left:804.41px;top:564px;font-size:14px;line-height:14px;color:#0f68b0;-webkit-text-stroke:0.55px #0f68b0">56</div>
<div class="t" style="left:972.81px;top:564px;font-size:14px;line-height:14px;color:#0f68b0;-webkit-text-stroke:0.55px #0f68b0">10</div>
<div class="t" style="left:1126.40px;top:564px;font-size:14px;line-height:14px;color:#2b2b36">Active</div>
<div class="t" style="left:167.50px;top:618px;font-size:14px;line-height:14px;color:#2b2b36;transform:scaleX(0.965);transform-origin:1.00px 0">Et, lobortis consequat consequ...</div>
<div class="t" style="left:441.50px;top:618px;font-size:14px;line-height:14px;color:#2b2b36;transform:scaleX(1.031);transform-origin:1.00px 0">Mentoring Admin</div>
<div class="t" style="left:614.40px;top:618px;font-size:14px;line-height:14px;color:#2b2b36;transform:scaleX(1.047);transform-origin:0.00px 0">09/01/2022</div>
<div class="t" style="left:804.41px;top:618px;font-size:14px;line-height:14px;color:#0f68b0;-webkit-text-stroke:0.55px #0f68b0">20</div>
<div class="t" style="left:977.20px;top:618px;font-size:14px;line-height:14px;color:#0f68b0;-webkit-text-stroke:0.55px #0f68b0">6</div>
<div class="t" style="left:1126.40px;top:618px;font-size:14px;line-height:14px;color:#2b2b36">Active</div>
<div class="t" style="left:168.50px;top:672px;font-size:14px;line-height:14px;color:#2b2b36;transform:scaleX(0.968);transform-origin:0.00px 0">Volutpat felis mus enim vehicu...</div>
<div class="t" style="left:441.50px;top:672px;font-size:14px;line-height:14px;color:#2b2b36;transform:scaleX(1.031);transform-origin:1.00px 0">Mentoring Admin</div>
<div class="t" style="left:614.40px;top:672px;font-size:14px;line-height:14px;color:#2b2b36;transform:scaleX(1.047);transform-origin:0.00px 0">06/01/2022</div>
<div class="t" style="left:804.41px;top:672px;font-size:14px;line-height:14px;color:#0f68b0;-webkit-text-stroke:0.55px #0f68b0">77</div>
<div class="t" style="left:977.20px;top:672px;font-size:14px;line-height:14px;color:#0f68b0;-webkit-text-stroke:0.55px #0f68b0">6</div>
<div class="t" style="left:1126.40px;top:672px;font-size:14px;line-height:14px;color:#2b2b36">Active</div>
<div class="t" style="left:167.50px;top:726px;font-size:14px;line-height:14px;color:#2b2b36;transform:scaleX(0.989);transform-origin:1.00px 0">Euismod hendrerit turpis pellen...</div>
<div class="t" style="left:441.50px;top:726px;font-size:14px;line-height:14px;color:#2b2b36;transform:scaleX(1.031);transform-origin:1.00px 0">Mentoring Admin</div>
<div class="t" style="left:614.40px;top:726px;font-size:14px;line-height:14px;color:#2b2b36;transform:scaleX(1.047);transform-origin:0.00px 0">05/01/2022</div>
<div class="t" style="left:804.41px;top:726px;font-size:14px;line-height:14px;color:#0f68b0;-webkit-text-stroke:0.55px #0f68b0">20</div>
<div class="t" style="left:977.20px;top:726px;font-size:14px;line-height:14px;color:#0f68b0;-webkit-text-stroke:0.55px #0f68b0">4</div>
<div class="t" style="left:1126.40px;top:726px;font-size:14px;line-height:14px;color:#2b2b36">Active</div>
<div class="t" style="left:168.50px;top:780px;font-size:14px;line-height:14px;color:#2b2b36;transform:scaleX(0.936);transform-origin:0.00px 0">Suspendisse neque, duis aeat vita...</div>
<div class="t" style="left:441.50px;top:780px;font-size:14px;line-height:14px;color:#2b2b36;transform:scaleX(1.031);transform-origin:1.00px 0">Mentoring Admin</div>
<div class="t" style="left:613.40px;top:780px;font-size:14px;line-height:14px;color:#2b2b36;letter-spacing:0.02px;transform:scaleX(1.060);transform-origin:1.00px 0">12/25/2021</div>
<div class="t" style="left:804.41px;top:780px;font-size:14px;line-height:14px;color:#0f68b0;-webkit-text-stroke:0.55px #0f68b0">46</div>
<div class="t" style="left:977.20px;top:780px;font-size:14px;line-height:14px;color:#0f68b0;-webkit-text-stroke:0.55px #0f68b0">7</div>
<div class="t" style="left:1125.40px;top:780px;font-size:14px;line-height:14px;color:#2b2b36;transform:scaleX(1.013);transform-origin:1.00px 0">Inactive</div>
<div class="t" style="left:167.50px;top:834px;font-size:14px;line-height:14px;color:#2b2b36;transform:scaleX(0.962);transform-origin:1.00px 0">Purus, vitae sed feugiapien lorem...</div>
<div class="t" style="left:441.50px;top:834px;font-size:14px;line-height:14px;color:#2b2b36;transform:scaleX(1.031);transform-origin:1.00px 0">Mentoring Admin</div>
<div class="t" style="left:613.40px;top:834px;font-size:14px;line-height:14px;color:#2b2b36;letter-spacing:0.02px;transform:scaleX(1.060);transform-origin:1.00px 0">12/24/2021</div>
<div class="t" style="left:804.41px;top:834px;font-size:14px;line-height:14px;color:#0f68b0;-webkit-text-stroke:0.55px #0f68b0">78</div>
<div class="t" style="left:972.81px;top:834px;font-size:14px;line-height:14px;color:#0f68b0;-webkit-text-stroke:0.55px #0f68b0">10</div>
<div class="t" style="left:1125.40px;top:834px;font-size:14px;line-height:14px;color:#2b2b36;transform:scaleX(1.013);transform-origin:1.00px 0">Inactive</div>
<div class="t" style="left:153.50px;top:895px;font-size:12px;line-height:12px;color:#2b2b36">Items per page:</div>
<div class="t" style="left:252.50px;top:893px;font-size:14px;line-height:14px;color:#2b2b36;transform:scaleX(0.938);transform-origin:0.00px 0">01</div>
<div class="t" style="left:311.00px;top:895px;font-size:12px;line-height:12px;color:#2b2b36;transform:scaleX(1.043);transform-origin:1.00px 0">| 1- 1 of 7 items</div>
<div class="t" style="left:1197.40px;top:894px;font-size:12px;line-height:12px;color:#2b2b36;transform:scaleX(0.987);transform-origin:0.00px 0">1 of 1 pages</div>
<div class="t" style="left:1310.50px;top:893px;font-size:14px;line-height:14px;color:#0f68b0;font-weight:700">1</div>
<div class="t" style="left:663.10px;top:1008px;font-size:14px;line-height:14px;color:#2b2b36;transform:scaleX(0.982);transform-origin:0.00px 0">© 2022 Insala. All rights reserved.</div></div>
</body></html>
